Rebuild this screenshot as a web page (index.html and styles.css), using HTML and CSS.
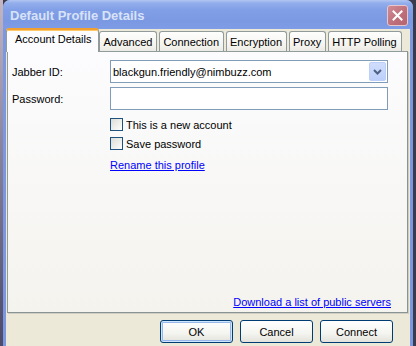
FILE: index.html
```html
<!DOCTYPE html>
<html lang="en">
<head>
  <meta charset="UTF-8">
  <title>Default Profile Details</title>
  <link rel="stylesheet" href="styles.css">
</head>
<body>
  <div class="window">
    <div class="titlebar">
      <span class="title">Default Profile Details</span>
      <button class="close" aria-label="Close">
        <svg width="11" height="11" viewBox="0 0 11 11">
          <path d="M1.5 1.5 L9.5 9.5 M9.5 1.5 L1.5 9.5" stroke="#fff" stroke-width="2" stroke-linecap="square"/>
        </svg>
      </button>
    </div>

    <div class="client">
      <div class="tabs">
        <div class="tab selected">Account Details</div>
        <div class="tab">Advanced</div>
        <div class="tab">Connection</div>
        <div class="tab">Encryption</div>
        <div class="tab">Proxy</div>
        <div class="tab">HTTP Polling</div>
      </div>

      <div class="panel">
        <div class="form">
          <label class="label">Jabber ID:</label>
          <div class="combo">
            <span class="combo-value">blackgun.friendly@nimbuzz.com</span>
            <span class="combo-btn">
              <svg width="9" height="6" viewBox="0 0 9 6">
                <path d="M1 1 L4.5 4.5 L8 1" fill="none" stroke="#4d6185" stroke-width="2"/>
              </svg>
            </span>
          </div>

          <label class="label">Password:</label>
          <div class="textbox"></div>
        </div>

        <div class="options">
          <label class="check"><span class="box"></span>This is a new account</label>
          <label class="check"><span class="box"></span>Save password</label>
          <a href="#" class="link rename">Rename this profile</a>
        </div>

        <a href="#" class="link servers">Download a list of public servers</a>
      </div>

      <div class="buttons">
        <button class="btn default">OK</button>
        <button class="btn">Cancel</button>
        <button class="btn">Connect</button>
      </div>
    </div>
  </div>
</body>
</html>
```

FILE: styles.css
```css
html, body {
  margin: 0;
  height: 100%;
}
body {
  font-family: "Liberation Sans", Arial, sans-serif;
  font-size: 11px;
  color: #000;
  background:
    linear-gradient(#c4b6c2, #8c86a0 40%, #4c4a68) left top / 3px 100% no-repeat,
    #3a3a4c;
  overflow: hidden;
}
.window {
  margin-left: 3px;
  width: 410px;
  height: 360px;
  background: #7a97e0;
  border-radius: 7px 7px 0 0;
  display: flex;
  flex-direction: column;
}
.titlebar {
  height: 29px;
  flex-shrink: 0;
  display: flex;
  align-items: center;
  justify-content: space-between;
  padding: 0 5px 0 7px;
  border-radius: 7px 7px 0 0;
  background: linear-gradient(#b2c6f2 0, #93aeec 3px, #819fe6 10px, #7b99e2 22px, #7f9de6 29px);
}
.title {
  font-weight: bold;
  font-size: 13px;
  color: #d8e2f7;
  margin-top: 1px;
}
.close {
  width: 21px;
  height: 21px;
  padding: 0;
  margin-top: 2px;
  border: 1px solid #e7c6cc;
  border-radius: 3px;
  background: linear-gradient(135deg, #d18c95, #bd6e79 60%, #b36470);
  display: flex;
  align-items: center;
  justify-content: center;
}
.client {
  flex: 1;
  margin: 0 3px;
  background: #ece9d8;
  display: flex;
  flex-direction: column;
}
.tabs {
  display: flex;
  align-items: flex-end;
  height: 22px;
  position: relative;
  z-index: 1;
}
.tab {
  height: 19px;
  padding: 0 4px 0 3px;
  margin-right: 2px;
  display: flex;
  align-items: center;
  justify-content: center;
  border: 1px solid #919b9c;
  border-bottom: none;
  border-radius: 3px 3px 0 0;
  background: linear-gradient(#fefefe, #f4f3ee 70%, #ebeae3);
  white-space: nowrap;
}
.tab.selected {
  margin-right: 0;
  margin-bottom: -1px;
  padding: 3px 7px 0 8px;
  border-top: 2px solid #f2a030;
  box-shadow: inset 0 1px 0 #ffc868;
  background: #fcfcfe;
  align-items: flex-start;
  box-sizing: border-box;
  height: 24px;
}
.panel {
  margin: 0 2px 0 1px;
  height: 262px;
  box-sizing: border-box;
  border: 1px solid #919b9c;
  border-right-color: #8a9394;
  border-bottom-color: #8a9394;
  box-shadow: 1px 1px 0 #d0cec3;
  background: linear-gradient(#fcfcfe, #f4f3ee);
  padding: 8px 16px 0 4px;
  display: flex;
  flex-direction: column;
}
.form {
  display: grid;
  grid-template-columns: 98px 1fr;
  grid-auto-rows: 23px;
  row-gap: 4px;
  align-items: center;
  margin-right: 3px;
}
.combo, .textbox {
  height: 23px;
  box-sizing: border-box;
  border: 1px solid #7f9db9;
  background: #fff;
}
.combo {
  display: flex;
  align-items: center;
  justify-content: space-between;
  padding: 0 1px 0 2px;
}
.combo-btn {
  width: 17px;
  height: 19px;
  box-sizing: border-box;
  border: 1px solid #bccffb;
  border-radius: 2px;
  background: linear-gradient(#d0ddfc, #bdcffa);
  display: flex;
  align-items: center;
  justify-content: center;
}
.options {
  margin-left: 98px;
  margin-top: 5px;
  display: flex;
  flex-direction: column;
}
.check {
  display: flex;
  align-items: center;
  height: 19px;
}
.box {
  width: 13px;
  height: 13px;
  box-sizing: border-box;
  border: 1px solid #1c5180;
  background: linear-gradient(135deg, #dcdcd7, #f7f7f5 80%, #fff);
  margin-right: 3px;
}
.link {
  color: #0000ff;
  text-decoration: underline;
}
.rename {
  margin-top: 6px;
  align-self: flex-start;
}
.servers {
  margin-top: auto;
  margin-bottom: 4px;
  align-self: flex-end;
}
.buttons {
  display: flex;
  justify-content: flex-end;
  gap: 7px;
  padding: 7px 17px 0 0;
}
.btn {
  width: 73px;
  height: 23px;
  font-family: inherit;
  font-size: 11px;
  color: #000;
  border: 1px solid #003c74;
  border-radius: 3px;
  background: linear-gradient(#fff, #f4f4f0 60%, #e3e2da);
  padding: 0;
}
.btn.default {
  box-shadow: inset 0 0 0 1px #cee7ff, inset 0 0 0 2px #98b8ea;
}
```
